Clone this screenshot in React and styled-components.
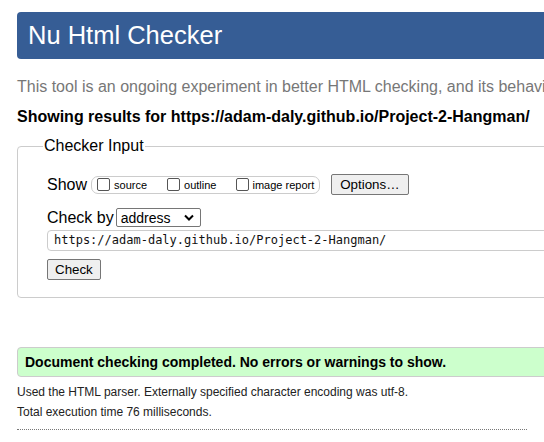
import React from "react";
import styled, { createGlobalStyle } from "styled-components";

const GlobalStyle = createGlobalStyle`
  html, body {
    margin: 0;
    padding: 0;
    overflow: hidden;
    background: #fff;
  }
  body {
    font-family: "Liberation Sans", Arial, sans-serif;
    color: #000;
  }
`;

const Page = styled.div`
  width: 1100px;
  padding: 12px 0 0 17px;
`;

const Header = styled.h1`
  margin: 0;
  height: 47px;
  background: #365d95;
  border-radius: 4px;
  color: #fff;
  font-weight: normal;
  font-size: 25.5px;
  line-height: 47px;
  padding-left: 11px;
`;

const Intro = styled.p`
  margin: 18px 0 0;
  color: #777;
  font-size: 16px;
  line-height: 20px;
  white-space: nowrap;
`;

const Results = styled.p`
  margin: 10px 0 0;
  font-size: 16px;
  font-weight: bold;
  line-height: 20px;
`;

const Fieldset = styled.fieldset`
  margin: 10px 0 0;
  padding: 8px 0 17px 29px;
  border: 1px solid #ccc;
  border-radius: 4px;
  legend {
    margin-left: -4px;
    padding: 0 1px;
    font-size: 16px;
    line-height: 18px;
  }
`;

const Row = styled.div`
  display: flex;
  align-items: center;
  margin-top: ${(p) => p.$top || 0}px;
  font-size: 16px;
`;

const Group = styled.span`
  display: inline-flex;
  align-items: center;
  box-sizing: border-box;
  margin-left: 4px;
  height: 18px;
  padding: 0 5px 0 5px;
  border: 1px solid #ccc;
  border-radius: 7px;
  font-size: 11px;
`;

const Box = styled.label`
  display: inline-flex;
  align-items: center;
  margin-right: ${(p) => p.$space || 0}px;
`;

const Tick = styled.span`
  display: inline-block;
  box-sizing: border-box;
  width: 13px;
  height: 13px;
  border: 1px solid #555;
  border-radius: 2px;
  margin-right: ${(p) => p.$gap || 4}px;
`;

const Button = styled.span`
  display: inline-flex;
  align-items: center;
  justify-content: center;
  box-sizing: border-box;
  height: 21px;
  margin-left: ${(p) => p.$left || 0}px;
  padding: 0 ${(p) => p.$pad || 6}px;
  background: #efefef;
  border: 1px solid #767676;
  border-radius: 2px;
  font-size: 13.33px;
`;

const Select = styled.span`
  display: inline-flex;
  align-items: center;
  justify-content: space-between;
  box-sizing: border-box;
  width: 85px;
  height: 19px;
  margin-left: 2px;
  padding: 0 6px 0 4px;
  border: 1px solid #767676;
  border-radius: 2px;
  font-size: 14px;
`;

const UrlInput = styled.div`
  box-sizing: border-box;
  margin-top: 3px;
  height: 21px;
  padding-left: 6px;
  border: 1px solid #ccc;
  border-radius: 4px;
  font-family: "DejaVu Sans Mono", "Liberation Mono", monospace;
  font-size: 12px;
  line-height: 19px;
  color: #111;
`;

const Success = styled.div`
  margin-top: 49px;
  height: 30px;
  box-sizing: border-box;
  padding-left: 7px;
  background: #ccffcc;
  border: 1px solid #ccc;
  border-radius: 4px;
  font-size: 14px;
  font-weight: bold;
  line-height: 28px;
`;

const Note = styled.p`
  margin: ${(p) => p.$top}px 0 0;
  font-size: 12px;
  line-height: 14px;
  color: #222;
`;

const Rule = styled.hr`
  margin: 10px 0 0;
  width: 510px;
  border: 0;
  border-top: 1px dotted #777;
`;

export default function App() {
  return (
    <Page>
      <GlobalStyle />
      <Header>Nu Html Checker</Header>
      <Intro>
        This tool is an ongoing experiment in better HTML checking, and its
        behavior remains subject to change
      </Intro>
      <Results>Showing results for https://adam-daly.github.io/Project-2-Hangman/</Results>
      <Fieldset>
        <legend>Checker Input</legend>
        <Row $top={11}>
          Show
          <Group>
            <Box $space={20}>
              <Tick />
              source
            </Box>
            <Box $space={20}>
              <Tick />
              outline
            </Box>
            <Box>
              <Tick $gap={3} />
              image report
            </Box>
          </Group>
          <Button $pad={8} $left={11}>
            Options…
          </Button>
        </Row>
        <Row $top={13}>
          Check by
          <Select>
            address
            <svg width="10" height="7" viewBox="0 0 10 7">
              <path d="M1 1.5l4 4 4-4" fill="none" stroke="#000" strokeWidth="2" />
            </svg>
          </Select>
        </Row>
        <UrlInput>https://adam-daly.github.io/Project-2-Hangman/</UrlInput>
        <Row $top={8}>
          <Button $pad={7}>Check</Button>
        </Row>
      </Fieldset>
      <Success>Document checking completed. No errors or warnings to show.</Success>
      <Note $top={8}>
        Used the HTML parser. Externally specified character encoding was utf-8.
      </Note>
      <Note $top={6}>Total execution time 76 milliseconds.</Note>
      <Rule />
    </Page>
  );
}
